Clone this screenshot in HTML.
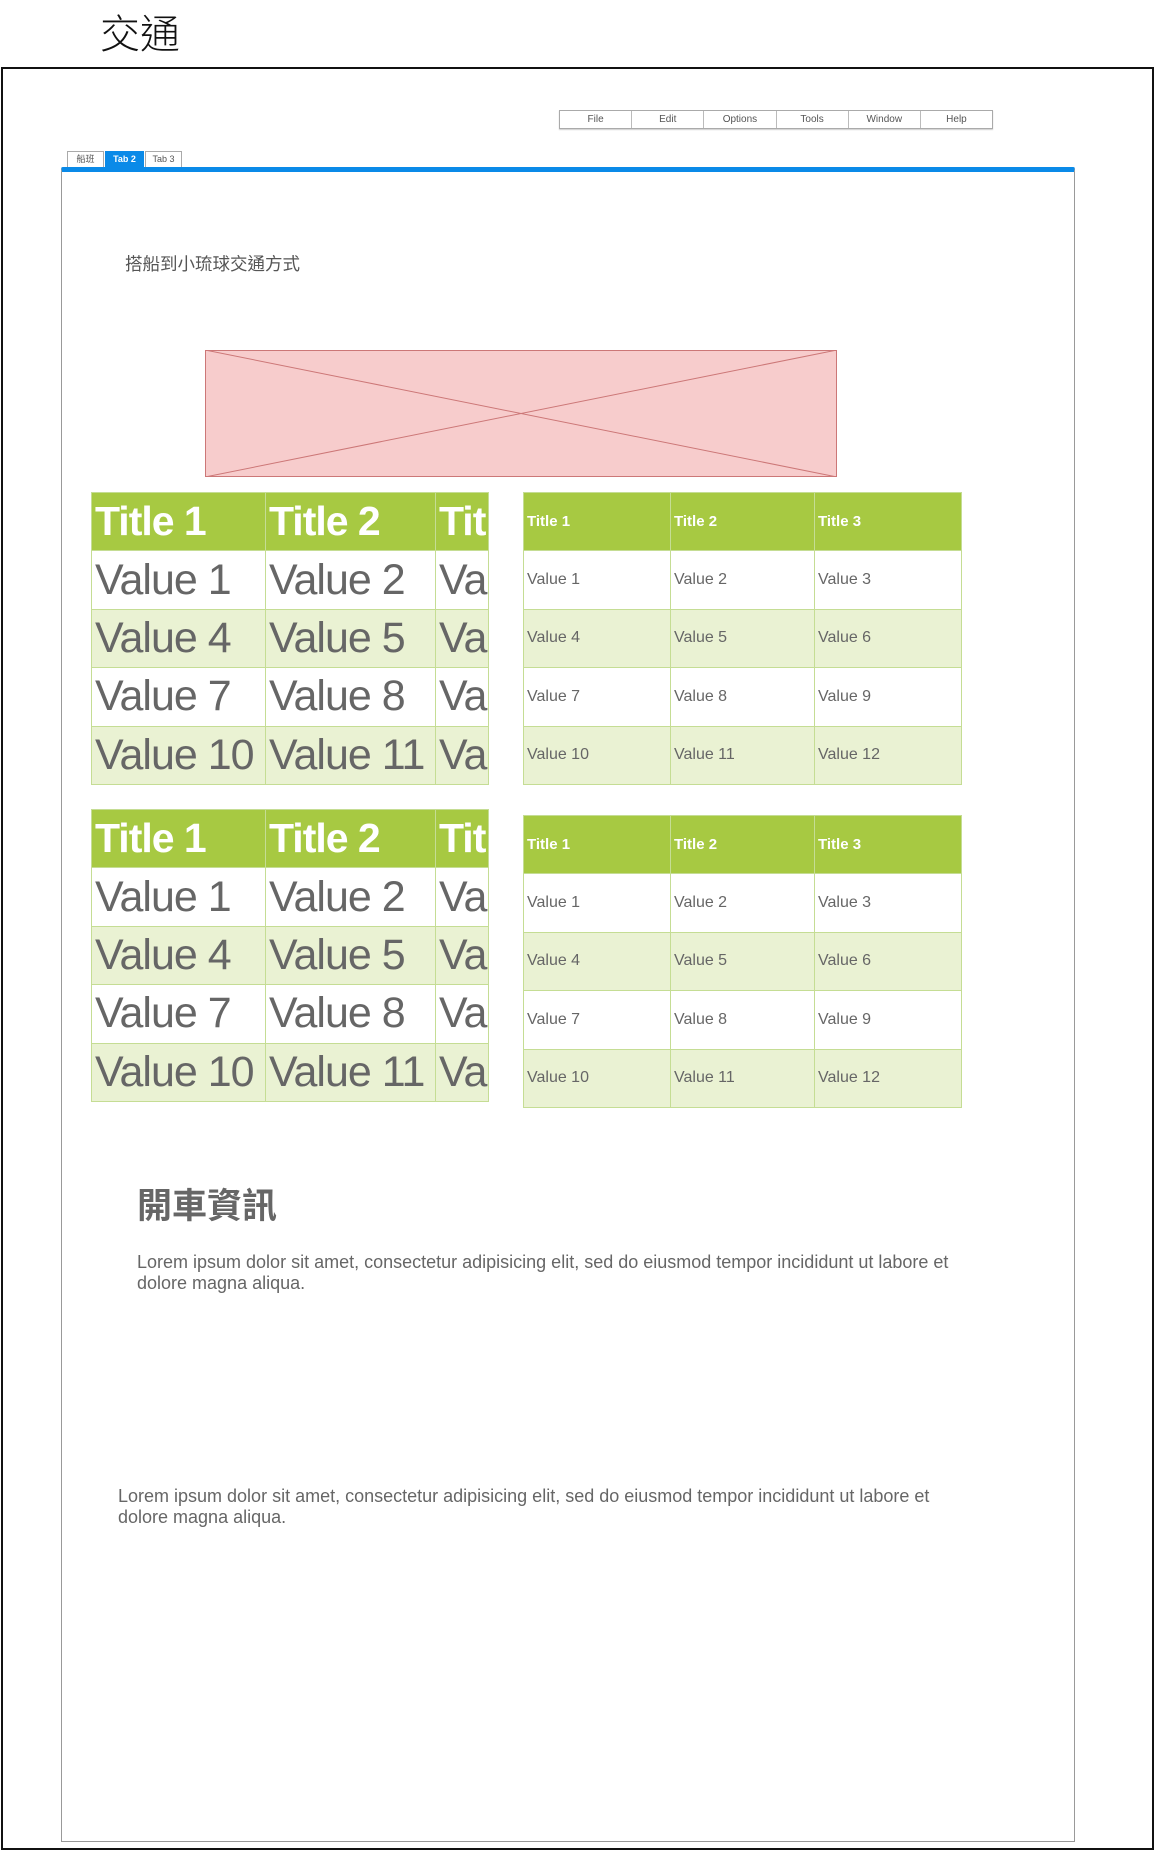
<!DOCTYPE html>
<html><head><meta charset="utf-8"><style>
body{margin:0;width:1155px;height:1852px;background:#fff;position:relative;overflow:hidden;font-family:"Liberation Sans","Noto Sans CJK TC",sans-serif;color:#666}
.abs{position:absolute}
.menu{left:559px;top:110px;width:432px;height:17px;border:1px solid #aaa;display:flex;box-shadow:0 1px 1px #ccc}
.menu div{flex:1;border-right:1px solid #bbb;font-size:10px;text-align:center;line-height:17px;color:#555}
.menu div:last-child{border-right:none}
.tab{top:151px;height:15px;border:1px solid #aaa;font-size:9px;line-height:15px;text-align:center;color:#555;background:#fff}
table{position:absolute;border-collapse:collapse;table-layout:fixed}
td,th{border:1px solid #c5dd94;overflow:hidden;white-space:nowrap;padding:0 0 0 3px;text-align:left;height:57px}
th{background:#a7c942;color:#fff}
tr:nth-child(odd) td{background:#eaf2d3}
.big th{font-size:41px;font-weight:bold;letter-spacing:-1px}
.big td{font-size:43px;color:#666;letter-spacing:-1px}
.sm th{font-size:15px;font-weight:bold}
.sm td{font-size:16px;color:#666}
</style></head><body>
<div class="abs" style="left:100px;top:2px;font-size:40px;color:#111;font-family:'Noto Sans CJK TC',sans-serif;font-weight:300">交通</div>
<div class="abs" style="left:1px;top:67px;width:1149px;height:1779px;border:2px solid #111"></div>
<div class="abs menu"><div>File</div><div>Edit</div><div>Options</div><div>Tools</div><div>Window</div><div>Help</div></div>
<div class="abs tab" style="left:67px;width:35px">船班</div>
<div class="abs tab" style="left:105px;width:37px;background:#0a8ae8;color:#fff;border-color:#0a8ae8;font-weight:bold">Tab 2</div>
<div class="abs tab" style="left:145px;width:35px">Tab 3</div>
<div class="abs" style="left:61px;top:167px;width:1012px;height:1669px;border:1px solid #999;border-top:5px solid #0a8ae8;border-radius:2px 2px 0 0"></div>
<div class="abs" style="left:125px;top:251px;font-size:17.5px;color:#555">搭船到小琉球交通方式</div>
<svg class="abs" style="left:205px;top:350px" width="632" height="127"><rect x=".5" y=".5" width="631" height="126" fill="#f7cccc" stroke="#c77"/><line x1="0" y1="0" x2="632" y2="127" stroke="#c77"/><line x1="632" y1="0" x2="0" y2="127" stroke="#c77"/></svg>
<table class="big" style="left:91px;top:492px;width:397px;height:293px"><colgroup><col style="width:174px"><col style="width:170px"><col style="width:53px"></colgroup>
<tr><th>Title 1</th><th>Title 2</th><th>Title 3</th></tr>
<tr><td>Value 1</td><td>Value 2</td><td>Value 3</td></tr>
<tr><td>Value 4</td><td>Value 5</td><td>Value 6</td></tr>
<tr><td>Value 7</td><td>Value 8</td><td>Value 9</td></tr>
<tr><td>Value 10</td><td>Value 11</td><td>Value 12</td></tr></table>
<table class="sm" style="left:523px;top:492px;width:438px;height:293px"><colgroup><col style="width:147px"><col style="width:144px"><col style="width:147px"></colgroup>
<tr><th>Title 1</th><th>Title 2</th><th>Title 3</th></tr>
<tr><td>Value 1</td><td>Value 2</td><td>Value 3</td></tr>
<tr><td>Value 4</td><td>Value 5</td><td>Value 6</td></tr>
<tr><td>Value 7</td><td>Value 8</td><td>Value 9</td></tr>
<tr><td>Value 10</td><td>Value 11</td><td>Value 12</td></tr></table>
<table class="big" style="left:91px;top:809px;width:397px;height:293px"><colgroup><col style="width:174px"><col style="width:170px"><col style="width:53px"></colgroup>
<tr><th>Title 1</th><th>Title 2</th><th>Title 3</th></tr>
<tr><td>Value 1</td><td>Value 2</td><td>Value 3</td></tr>
<tr><td>Value 4</td><td>Value 5</td><td>Value 6</td></tr>
<tr><td>Value 7</td><td>Value 8</td><td>Value 9</td></tr>
<tr><td>Value 10</td><td>Value 11</td><td>Value 12</td></tr></table>
<table class="sm" style="left:523px;top:815px;width:438px;height:293px"><colgroup><col style="width:147px"><col style="width:144px"><col style="width:147px"></colgroup>
<tr><th>Title 1</th><th>Title 2</th><th>Title 3</th></tr>
<tr><td>Value 1</td><td>Value 2</td><td>Value 3</td></tr>
<tr><td>Value 4</td><td>Value 5</td><td>Value 6</td></tr>
<tr><td>Value 7</td><td>Value 8</td><td>Value 9</td></tr>
<tr><td>Value 10</td><td>Value 11</td><td>Value 12</td></tr></table>
<div class="abs" style="left:137px;top:1178px;font-size:35px;font-weight:bold;color:#666">開車資訊</div>
<div class="abs" style="left:137px;top:1252px;width:830px;font-size:18px;line-height:21px;color:#666">Lorem ipsum dolor sit amet, consectetur adipisicing elit, sed do eiusmod tempor incididunt ut labore et dolore magna aliqua.</div>
<div class="abs" style="left:118px;top:1486px;width:830px;font-size:18px;line-height:21px;color:#666">Lorem ipsum dolor sit amet, consectetur adipisicing elit, sed do eiusmod tempor incididunt ut labore et dolore magna aliqua.</div>
</body></html>
